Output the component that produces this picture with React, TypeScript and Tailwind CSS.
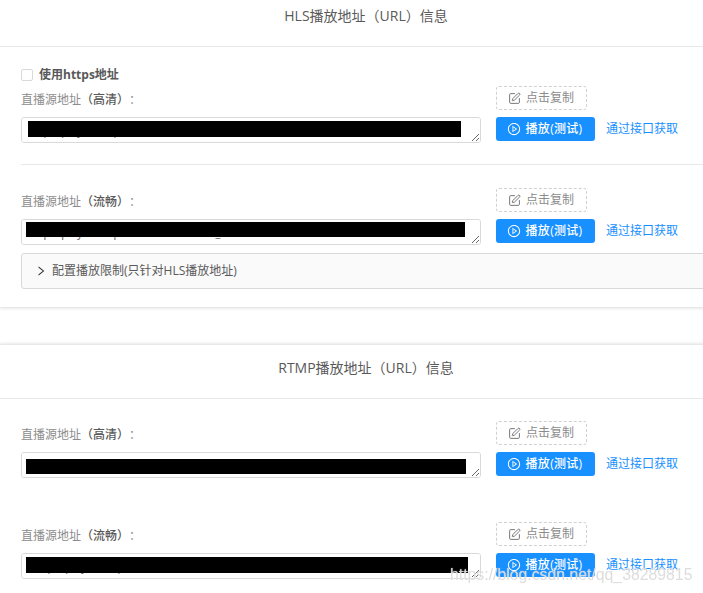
import React from 'react';
import { AiOutlinePlayCircle, AiOutlineRight } from 'react-icons/ai';
import { SquarePen } from 'lucide-react';

const fontStack = 'font-["Open_Sans","Noto_Sans_CJK_SC",sans-serif]';

interface RowProps {
  quality: string;
  value: string;
  maskClass: string;
}

function AddressRow({ quality, value, maskClass }: RowProps) {
  return (
    <div className="flex gap-[15px]">
      <div className="w-[460px]">
        <div className="h-[31px] pt-[5px] text-[12px] leading-[18px] text-[#8c8c8c] [text-spacing-trim:space-all]">
          直播源地址<span className="font-medium text-[#595959]">（{quality}）</span>：
        </div>
        <div className="relative h-[26px]">
          <textarea
            readOnly
            defaultValue={value}
            className="block h-[26px] min-h-[26px] w-[460px] rounded-[3px] border border-[#d9d9d9] bg-white px-[7px] py-[5px] text-[11px] leading-[16px] text-[#595959] outline-none"
          />
          <div className={`absolute bg-black ${maskClass}`} />
        </div>
      </div>
      <div className="flex flex-col gap-[7px]">
        <button className="flex h-[24px] w-[91px] items-center justify-center gap-[5px] rounded-[3px] border border-dashed border-[#d0d0d0] bg-white pr-[1px] text-[12px] text-[#8c8c8c]">
          <SquarePen size={13} strokeWidth={1.8} className="text-[#737373]" />
          点击复制
        </button>
        <div className="flex items-center gap-[11px]">
          <button className="flex h-[24px] w-[99px] items-center justify-center gap-[5px] rounded-[3px] bg-[#1890ff] pr-[2px] text-[12px] font-medium text-white">
            <AiOutlinePlayCircle size={14} />
            <span className="tracking-[0.3px]">播放(测试)</span>
          </button>
          <a className="text-[12px] text-[#1890ff]">通过接口获取</a>
        </div>
      </div>
    </div>
  );
}

function CardHeader({ title }: { title: string }) {
  return (
    <div className="flex h-[54px] items-start justify-center border-b border-[#e8e8e8] pt-[12px] text-[14px] leading-[22px] text-[#595959]">
      {title}
    </div>
  );
}

export default function App() {
  return (
    <div className={`relative h-[593px] w-[703px] overflow-hidden bg-white ${fontStack}`}>
      {/* HLS card */}
      <div className="-ml-[3px] -mt-[7px] w-[738px] rounded-[4px] bg-white shadow-[0_0_4px_rgba(0,0,0,0.22)]">
        <CardHeader title="HLS播放地址（URL）信息" />
        <div className="pb-[18px] pl-[24px] pt-[18px]">
          <label className="flex h-[21px] items-start gap-[6px] pt-[1px] text-[12px] font-bold leading-[18px] text-[#595959]">
            <span className="mt-[3px] h-[12px] w-[12px] rounded-[2px] border border-[#d9d9d9] bg-white" />
            使用https地址
          </label>
          <AddressRow
            quality="高清"
            value="http://play.example.com/live/stream.m3u8"
            maskClass="left-[7px] top-[4px] h-[16px] w-[433px]"
          />
          <div className="mt-[21px] h-px w-[688px] bg-[#e8e8e8]" />
          <div className="mt-[23px]">
            <AddressRow
              quality="流畅"
              value="http://play.example.com/live/stream_ld.m3u8"
              maskClass="left-[5px] top-[3px] h-[15px] w-[439px]"
            />
          </div>
          <div className="mt-[8px] flex h-[36px] w-[714px] items-center gap-[5px] rounded-[3px] border border-[#d9d9d9] bg-[#fafafa] pl-[13px] text-[12px] text-[#595959]">
            <AiOutlineRight size={12} className="text-[#262626]" />
            配置播放限制(只针对HLS播放地址)
          </div>
        </div>
      </div>

      {/* RTMP card */}
      <div className="-ml-[3px] mt-[38px] w-[738px] rounded-[4px] bg-white shadow-[0_0_4px_rgba(0,0,0,0.22)]">
        <CardHeader title="RTMP播放地址（URL）信息" />
        <div className="pb-[18px] pl-[24px] pt-[22px]">
          <AddressRow
            quality="高清"
            value="rtmp://play.example.com/live/stream"
            maskClass="left-[5px] top-[7px] h-[15px] w-[440px]"
          />
          <div className="mt-[44px]">
            <AddressRow
              quality="流畅"
              value="rtmp://play.example.com/live/stream_ld"
              maskClass="left-[5px] top-[4px] h-[16px] w-[442px]"
            />
          </div>
        </div>
      </div>

      {/* csdn watermark */}
      <div className='absolute left-[450px] top-[566px] font-["Liberation_Sans",sans-serif] text-[15.8px] leading-[18px] text-[#d4d4d4]/80 [text-shadow:0_0_1px_rgba(255,255,255,0.9)]'>
        https://blog.csdn.net/qq_38289815
      </div>
    </div>
  );
}
